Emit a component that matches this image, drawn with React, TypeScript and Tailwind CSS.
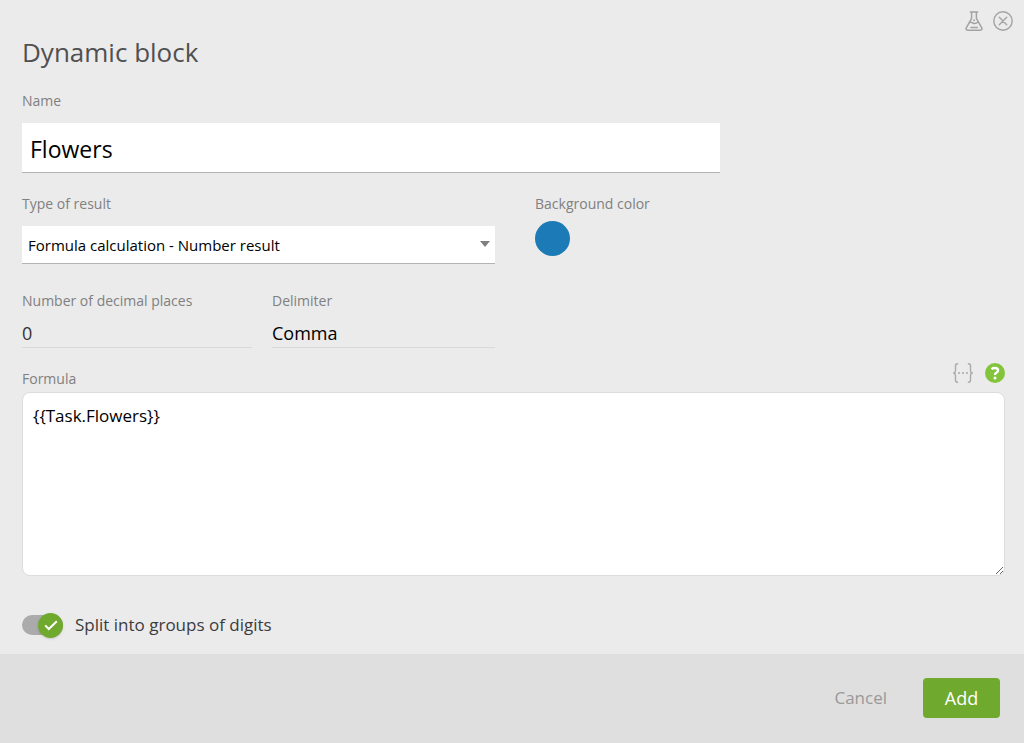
import React, { useState } from 'react';

const FlaskIcon = () => (
  <svg width="18" height="20" viewBox="0 0 18 20" fill="none" stroke="#a3a3a3" strokeWidth="1.5" strokeLinecap="round" strokeLinejoin="round">
    <path d="M5.4 0.9h7.2M6.6 1.2v6.2L1.4 16.6c-.8 1.5-.2 2.6 1.3 2.6h12.6c1.5 0 2.1-1.1 1.3-2.6L11.4 7.4V1.2" />
    <path d="M4.4 11.6c1.4-.6 2.4-.3 3.4.4 1.8 1 3.4.6 5.2-1M8.6 9.2h.8" />
    <path d="M6 16.6h6.4" />
  </svg>
);

const CloseIcon = () => (
  <svg width="20" height="20" viewBox="0 0 20 20" fill="none" stroke="#a3a3a3" strokeWidth="1.4" strokeLinecap="round">
    <circle cx="10" cy="10" r="9.2" />
    <path d="M6.3 6.3l7.4 7.4M13.7 6.3l-7.4 7.4" />
  </svg>
);

const BracesIcon = () => (
  <svg width="20" height="20" viewBox="0 0 20 20" fill="none" stroke="#aaa" strokeWidth="1.4" strokeLinecap="round" strokeLinejoin="round">
    <path d="M4.6.8C3 .8 2.5 1.4 2.5 2.8v4.6c0 1.5-.6 2.3-1.8 2.6 1.2.3 1.8 1.1 1.8 2.6v4.6c0 1.4.5 2 2.1 2" />
    <path d="M15.4.8c1.6 0 2.1.6 2.1 2v4.6c0 1.5.6 2.3 1.8 2.6-1.2.3-1.8 1.1-1.8 2.6v4.6c0 1.4-.5 2-2.1 2" />
    <path d="M6 10h.01M10 10h.01M14 10h.01" strokeWidth="2" />
  </svg>
);

const HelpIcon = () => (
  <svg width="20" height="20" viewBox="0 0 20 20" fill="none">
    <circle cx="10" cy="10" r="10" fill="#84c43c" />
    <path d="M6.5 6.1C7.4 5.3 8.6 5 9.8 5c2.1 0 3.3.8 3.3 2.3 0 1.3-.8 1.9-1.8 2.5-.9.5-1.3.9-1.3 2.1" stroke="#fff" strokeWidth="2.4" />
    <circle cx="10" cy="15" r="1.5" fill="#fff" />
  </svg>
);

const labelClass = 'block text-sm leading-5 text-[#808080]';
const lineInputClass = 'mt-2 block h-[29px] w-full border-b border-[#d9d9d9] bg-transparent text-lg outline-none';

export default function App() {
  const [name, setName] = useState('Flowers');
  const [decimals, setDecimals] = useState('0');
  const [delimiter, setDelimiter] = useState('Comma');
  const [formula, setFormula] = useState('{{Task.Flowers}}');
  const [split, setSplit] = useState(true);

  return (
    <div className="flex min-h-screen flex-col bg-[#ebebeb] font-['Open_Sans','Noto_Sans',sans-serif]">
      <div className="flex justify-end gap-2.5 pt-[11px] pr-[11px]">
        <button type="button" aria-label="Test"><FlaskIcon /></button>
        <button type="button" aria-label="Close"><CloseIcon /></button>
      </div>

      <main className="flex-1 pr-[19px] pb-[15px] pl-[22px]">
        <h1 className="mt-1 text-[26px] leading-[34px] text-[#505050]">Dynamic block</h1>

        <div className="mt-[22px] max-w-[698px]">
          <label htmlFor="name" className={labelClass}>Name</label>
          <input
            id="name"
            value={name}
            onChange={(e) => setName(e.target.value)}
            className="mt-3 block h-[50px] w-full border-b border-[#b3b3b3] bg-white px-2 pt-0.5 text-[23px] text-black outline-none"
          />
        </div>

        <div className="mt-[21px] flex gap-10">
          <div className="w-full max-w-[473px]">
            <label htmlFor="type" className={labelClass}>Type of result</label>
            <div className="relative mt-3">
              <select id="type" className="block h-[38px] w-full appearance-none border-b border-[#b3b3b3] bg-white pt-0.5 pr-7 pl-1.5 text-[15px] text-black outline-none">
                <option>Formula calculation - Number result</option>
              </select>
              <svg className="pointer-events-none absolute top-[15px] right-[5px]" width="10" height="6" viewBox="0 0 10 6">
                <path d="M0 0h10L5 6z" fill="#808080" />
              </svg>
            </div>
          </div>
          <div className="shrink-0">
            <label htmlFor="color" className={labelClass}>Background color</label>
            <button id="color" type="button" className="mt-[7px] block size-[35px] rounded-full bg-[#1c7bb7]" />
          </div>
        </div>

        <div className="mt-[27px] grid max-w-[473px] grid-cols-[230fr_223fr] gap-5">
          <div>
            <label htmlFor="decimals" className={labelClass}>Number of decimal places</label>
            <input id="decimals" value={decimals} onChange={(e) => setDecimals(e.target.value)} className={`${lineInputClass} text-[#333]`} />
          </div>
          <div>
            <label htmlFor="delimiter" className={labelClass}>Delimiter</label>
            <input id="delimiter" value={delimiter} onChange={(e) => setDelimiter(e.target.value)} className={`${lineInputClass} text-black`} />
          </div>
        </div>

        <div className="mt-[15px] flex items-end justify-between">
          <label htmlFor="formula" className={labelClass}>Formula</label>
          <div className="mb-1.5 flex gap-3">
            <button type="button" aria-label="Insert field"><BracesIcon /></button>
            <button type="button" aria-label="Help"><HelpIcon /></button>
          </div>
        </div>
        <textarea
          id="formula"
          value={formula}
          onChange={(e) => setFormula(e.target.value)}
          className="mt-[3px] block h-[184px] w-full resize rounded-lg border border-[#dcdcdc] bg-white px-2.5 py-2.5 text-[17px] leading-[26px] text-black outline-none"
        />

        <label className="mt-9 flex w-fit cursor-pointer items-center">
          <input type="checkbox" checked={split} onChange={(e) => setSplit(e.target.checked)} className="peer sr-only" />
          <span className="flex h-5 w-[41px] items-center rounded-full bg-[#ababab] peer-checked:justify-end">
            <span className="flex size-[25px] shrink-0 items-center justify-center rounded-full bg-[#6fa92e] shadow-sm">
              <svg width="14" height="11" viewBox="0 0 14 11" fill="none" stroke="#fff" strokeWidth="2">
                <path d="M1.2 5.4l3.6 3.6 8-7.8" />
              </svg>
            </span>
          </span>
          <span className="ml-3 text-[17px] leading-[26px] text-[#3c3c3c]">Split into groups of digits</span>
        </label>
      </main>

      <footer className="flex items-center justify-end gap-9 bg-[#dfdfdf] pt-6 pr-6 pb-[25px]">
        <button type="button" className="text-[17px] text-[#999]">Cancel</button>
        <button type="button" className="h-10 w-[77px] rounded bg-[#6fa92e] text-lg text-white">Add</button>
      </footer>
    </div>
  );
}
